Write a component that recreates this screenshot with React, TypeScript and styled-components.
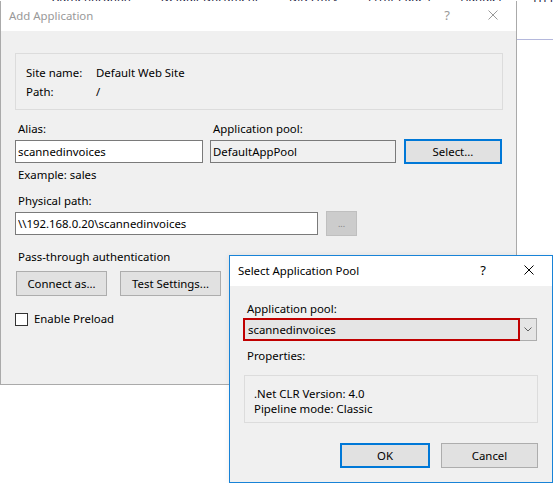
import React from 'react';
import styled, { createGlobalStyle } from 'styled-components';

const GlobalStyle = createGlobalStyle`
  html, body {
    margin: 0;
    padding: 0;
    background: #ffffff;
  }
  body {
    font-family: "Noto Sans", "Open Sans", sans-serif;
    font-size: 11.4px;
    color: #000000;
  }
`;

const Desktop = styled.div`
  position: relative;
  width: 553px;
  height: 483px;
  overflow: hidden;
  background: #ffffff;
`;

// what is left visible of the window behind the dialogs
const BackdropStrip = styled.div`
  display: flex;
  align-items: flex-end;
  height: 2px;
  overflow: hidden;
  padding-left: 52px;
  gap: 30px;
`;

const BackdropWord = styled.span`
  line-height: 9px;
  color: #1a1a40;
  white-space: nowrap;
`;

const BackdropRule = styled.div`
  margin-top: 37px;
  height: 1px;
  background: #b4b8dc;
`;

const Window = styled.div<{ $active?: boolean }>`
  position: absolute;
  box-sizing: border-box;
  display: flex;
  flex-direction: column;
  background: #f0f0f0;
  border: 1px solid ${p => (p.$active ? '#1883d7' : '#aaaaaa')};
`;

const AddAppWindow = styled(Window)`
  left: 0;
  top: 1px;
  width: 517px;
  height: 384px;
  border-top: none;
`;

const PoolWindow = styled(Window)`
  left: 229px;
  top: 255px;
  width: 324px;
  height: 228px;
  box-shadow: 0 0 6px rgba(0, 0, 0, 0.08);
`;

const TitleBar = styled.div`
  box-sizing: border-box;
  display: flex;
  align-items: center;
  height: 30px;
  flex-shrink: 0;
  background: #ffffff;
  padding: 0 0 2px 8px;
`;

const TitleText = styled.div<{ $active?: boolean }>`
  flex: 1;
  font-size: 11.4px;
  color: ${p => (p.$active ? '#000000' : '#999999')};
`;

const CaptionButton = styled.div<{ $active?: boolean }>`
  width: 46px;
  height: 28px;
  display: flex;
  align-items: center;
  justify-content: center;
  font-size: 13px;
  color: ${p => (p.$active ? '#000000' : '#999999')};
`;

const Body = styled.div<{ $padLeft: number; $padRight: number }>`
  flex: 1;
  display: flex;
  flex-direction: column;
  align-items: flex-start;
  padding-left: ${p => p.$padLeft}px;
  padding-right: ${p => p.$padRight}px;
`;

const GroupBox = styled.div`
  box-sizing: border-box;
  width: 488px;
  margin-top: 22px;
  padding: 9px 0 8px 10px;
  border: 1px solid #dcdcdc;
`;

const InfoRow = styled.div`
  display: grid;
  grid-template-columns: 70px 1fr;
  line-height: 19px;
`;

const Label = styled.div<{ $top: number; $indent?: number }>`
  margin-top: ${p => p.$top}px;
  padding-left: ${p => p.$indent ?? 3}px;
  line-height: 16px;
  white-space: nowrap;
`;

const LabelRow = styled.div<{ $top: number }>`
  display: flex;
  margin-top: ${p => p.$top}px;
  line-height: 16px;
`;

const LabelCell = styled.div<{ $width?: number }>`
  width: ${p => (p.$width ? `${p.$width}px` : 'auto')};
  padding-left: 3px;
  box-sizing: border-box;
`;

const ControlRow = styled.div<{ $top: number; $gap: number }>`
  display: flex;
  align-items: center;
  gap: ${p => p.$gap}px;
  margin-top: ${p => p.$top}px;
`;

const TextBox = styled.input<{ $width: number; $readOnlyLook?: boolean }>`
  box-sizing: border-box;
  width: ${p => p.$width}px;
  height: 23px;
  margin: 0;
  padding: 0 2px;
  font: inherit;
  color: #000000;
  border: 1px solid #7a7a7a;
  background: ${p => (p.$readOnlyLook ? '#f0f0f0' : '#ffffff')};
  outline: none;
`;

const PushButton = styled.button<{ $width: number; $isDefault?: boolean; $offset?: number }>`
  box-sizing: border-box;
  width: ${p => p.$width}px;
  height: 25px;
  margin: 0 0 0 ${p => p.$offset ?? 0}px;
  padding: 0;
  font: inherit;
  color: #000000;
  background: #e1e1e1;
  border: ${p => (p.$isDefault ? '2px solid #0078d7' : '1px solid #adadad')};
  cursor: default;
`;

const DisabledButton = styled(PushButton)`
  background: #cccccc;
  border: 1px solid #bfbfbf;
  color: #838383;
  font-size: 9px;
`;

const CheckRow = styled.div`
  display: flex;
  align-items: center;
  gap: 6px;
  margin-top: 15px;
  line-height: 16px;
`;

const CheckBox = styled.span`
  box-sizing: border-box;
  width: 13px;
  height: 13px;
  border: 1px solid #333333;
  background: #ffffff;
`;

const Combo = styled.div`
  display: flex;
  width: 294px;
  height: 23px;
  margin-top: 1px;
  background: #e5e5e5;
`;

const ComboValue = styled.div`
  box-sizing: border-box;
  flex: 1;
  display: flex;
  align-items: center;
  padding-left: 3px;
  border: 2px solid #c00000;
`;

const ComboArrow = styled.div`
  box-sizing: border-box;
  width: 17px;
  display: flex;
  align-items: center;
  justify-content: center;
  border: 1px solid #adadad;
  border-left: none;
`;

const PropsBox = styled.div`
  box-sizing: border-box;
  width: 294px;
  margin: 11px 0 0 1px;
  padding: 10px 0 6px 9px;
  border: 1px solid #dcdcdc;
  line-height: 15px;
`;

const DialogButtons = styled.div`
  align-self: stretch;
  display: flex;
  justify-content: flex-end;
  gap: 11px;
  margin-top: 20px;
`;

const CloseIcon = ({ color }: { color: string }) => (
  <svg width="10" height="10" viewBox="0 0 10 10">
    <path d="M0.5 0.5 L9.5 9.5 M9.5 0.5 L0.5 9.5" stroke={color} strokeWidth="1" fill="none" />
  </svg>
);

const ChevronIcon = () => (
  <svg width="8" height="5" viewBox="0 0 8 5">
    <path d="M0.5 0.5 L4 4 L7.5 0.5" stroke="#606060" strokeWidth="1" fill="none" />
  </svg>
);

const App = (): JSX.Element => {
  return (
    <Desktop>
      <GlobalStyle />
      <BackdropStrip>
        <BackdropWord>Authentication</BackdropWord>
        <BackdropWord>Default Document</BackdropWord>
        <BackdropWord>Directory</BackdropWord>
        <BackdropWord>Error Pages</BackdropWord>
        <BackdropWord>Handler</BackdropWord>
        <BackdropWord>HTTP Redirect</BackdropWord>
        <BackdropWord>Logging</BackdropWord>
      </BackdropStrip>
      <BackdropRule />

      <AddAppWindow>
        <TitleBar>
          <TitleText>Add Application</TitleText>
          <CaptionButton>?</CaptionButton>
          <CaptionButton>
            <CloseIcon color="#999999" />
          </CaptionButton>
        </TitleBar>
        <Body $padLeft={14} $padRight={14}>
          <GroupBox>
            <InfoRow>
              <span>Site name:</span>
              <span>Default Web Site</span>
            </InfoRow>
            <InfoRow>
              <span>Path:</span>
              <span>/</span>
            </InfoRow>
          </GroupBox>

          <LabelRow $top={11}>
            <LabelCell $width={195}>Alias:</LabelCell>
            <LabelCell>Application pool:</LabelCell>
          </LabelRow>
          <ControlRow $top={2} $gap={7}>
            <TextBox $width={188} readOnly value="scannedinvoices" />
            <TextBox $width={186} $readOnlyLook readOnly value="DefaultAppPool" />
            <PushButton $width={98} $isDefault $offset={1}>Select...</PushButton>
          </ControlRow>
          <Label $top={3}>Example: sales</Label>

          <Label $top={10}>Physical path:</Label>
          <ControlRow $top={2} $gap={8}>
            <TextBox $width={303} readOnly value="\\192.168.0.20\scannedinvoices" />
            <DisabledButton $width={31} disabled>...</DisabledButton>
          </ControlRow>

          <Label $top={13}>Pass-through authentication</Label>
          <ControlRow $top={6} $gap={13}>
            <PushButton $width={91} $offset={1}>Connect as...</PushButton>
            <PushButton $width={101}>Test Settings...</PushButton>
          </ControlRow>

          <CheckRow>
            <CheckBox />
            <span>Enable Preload</span>
          </CheckRow>
        </Body>
      </AddAppWindow>

      <PoolWindow $active>
        <TitleBar>
          <TitleText $active>Select Application Pool</TitleText>
          <CaptionButton $active>?</CaptionButton>
          <CaptionButton $active>
            <CloseIcon color="#000000" />
          </CaptionButton>
        </TitleBar>
        <Body $padLeft={13} $padRight={14}>
          <Label $top={15} $indent={4}>Application pool:</Label>
          <Combo>
            <ComboValue>scannedinvoices</ComboValue>
            <ComboArrow>
              <ChevronIcon />
            </ComboArrow>
          </Combo>
          <Label $top={7} $indent={4}>Properties:</Label>
          <PropsBox>
            <div>.Net CLR Version: 4.0</div>
            <div>Pipeline mode: Classic</div>
          </PropsBox>
          <DialogButtons>
            <PushButton $width={90} $isDefault>OK</PushButton>
            <PushButton $width={97}>Cancel</PushButton>
          </DialogButtons>
        </Body>
      </PoolWindow>
    </Desktop>
  );
};

export default App;
